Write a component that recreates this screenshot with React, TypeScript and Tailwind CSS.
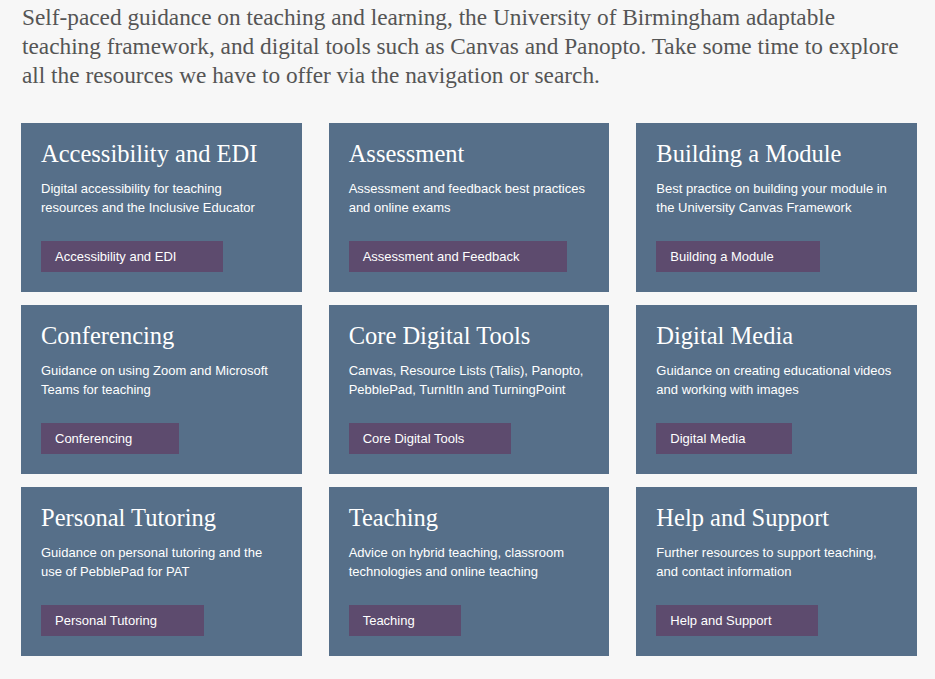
import React from 'react';

type Card = {
  title: string;
  text: string;
  link: string;
  width: string;
};

const CARDS: Card[] = [
  { title: 'Accessibility and EDI', text: 'Digital accessibility for teaching resources and the Inclusive Educator', link: 'Accessibility and EDI', width: 'w-[182px]' },
  { title: 'Assessment', text: 'Assessment and feedback best practices and online exams', link: 'Assessment and Feedback', width: 'w-[218px]' },
  { title: 'Building a Module', text: 'Best practice on building your module in the University Canvas Framework', link: 'Building a Module', width: 'w-[164px]' },
  { title: 'Conferencing', text: 'Guidance on using Zoom and Microsoft Teams for teaching', link: 'Conferencing', width: 'w-[138px]' },
  { title: 'Core Digital Tools', text: 'Canvas, Resource Lists (Talis), Panopto, PebblePad, TurnItIn and TurningPoint', link: 'Core Digital Tools', width: 'w-[162px]' },
  { title: 'Digital Media', text: 'Guidance on creating educational videos and working with images', link: 'Digital Media', width: 'w-[136px]' },
  { title: 'Personal Tutoring', text: 'Guidance on personal tutoring and the use of PebblePad for PAT', link: 'Personal Tutoring', width: 'w-[163px]' },
  { title: 'Teaching', text: 'Advice on hybrid teaching, classroom technologies and online teaching', link: 'Teaching', width: 'w-[112px]' },
  { title: 'Help and Support', text: 'Further resources to support teaching, and contact information', link: 'Help and Support', width: 'w-[162px]' },
];

function TopicCard({ card }: { card: Card }) {
  return (
    <div className="bg-[#566f89] pl-5 pr-[22px] pt-4 pb-5">
      <h2 className="font-['Liberation_Serif',serif] text-[24.5px] leading-[30px] whitespace-nowrap text-white">
        {card.title}
      </h2>
      <p className="mt-[10px] font-['Liberation_Sans',Arial,sans-serif] text-[13px] leading-[19px] text-white">
        {card.text}
      </p>
      <a
        href="#"
        className={`mt-[24px] flex h-[31px] items-center bg-[#5d4b6e] pl-[14px] font-['Liberation_Sans',Arial,sans-serif] text-[13px] text-white ${card.width}`}
      >
        {card.link}
      </a>
    </div>
  );
}

export default function App() {
  return (
    <div className="min-h-screen bg-[#f7f7f7] pl-[21px] pr-[18px] pt-[3px] pb-6">
      <p className="pl-[1px] font-['Liberation_Serif',serif] text-[23.3px] leading-[29px] text-[#555555]">
        Self-paced guidance on teaching and learning, the University of Birmingham adaptable teaching framework, and digital tools such as Canvas and Panopto. Take some time to explore all the resources we have to offer via the navigation or search.
      </p>
      <div className="mt-[33px] grid grid-cols-3 gap-x-[27px] gap-y-[13px]">
        {CARDS.map((c) => (
          <TopicCard key={c.title} card={c} />
        ))}
      </div>
    </div>
  );
}
